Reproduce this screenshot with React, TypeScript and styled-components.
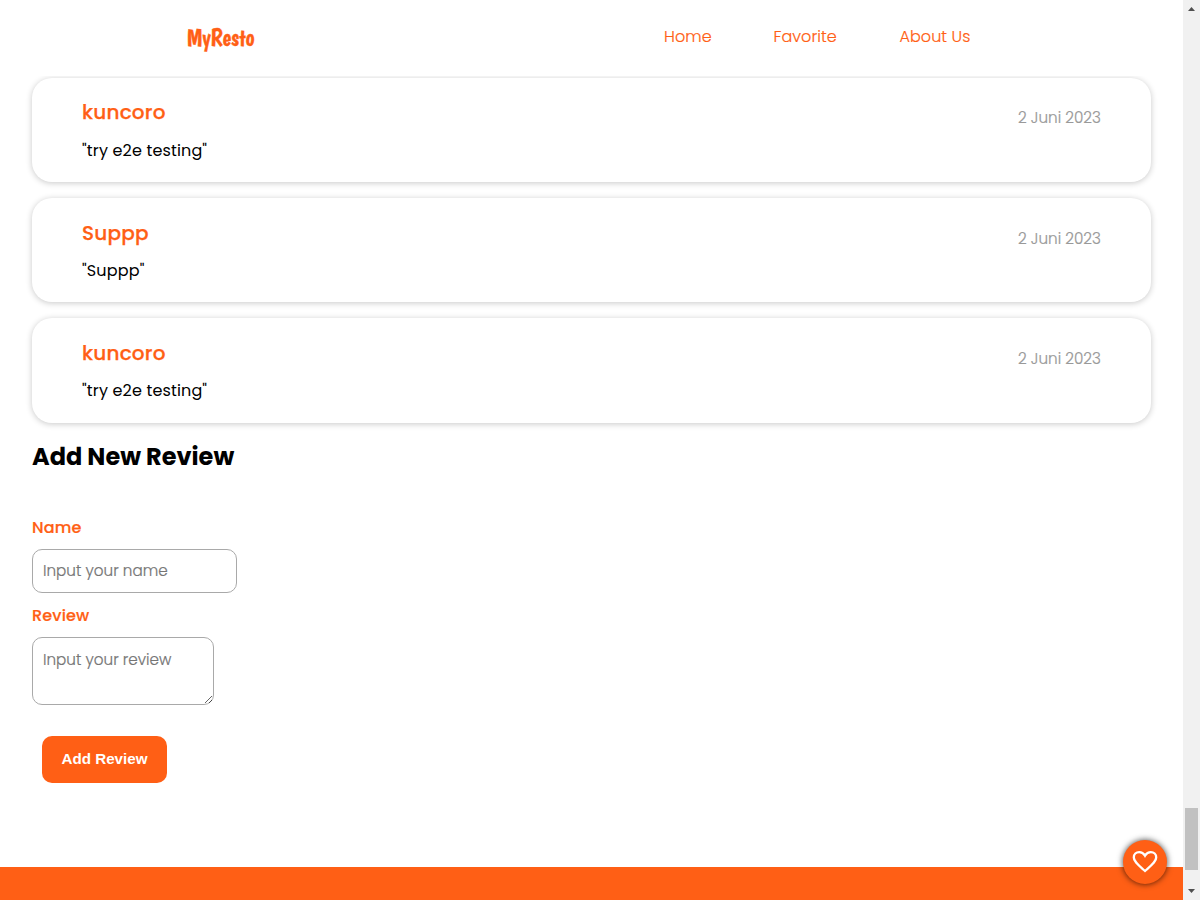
import React from "react";
import styled, { createGlobalStyle } from "styled-components";

const ORANGE = "#ff5f15";
const FONT = 'Poppins, Inter, "Open Sans", sans-serif';

const GlobalStyle = createGlobalStyle`
  * { box-sizing: border-box; }
  body { margin: 0; overflow: hidden; background: #fff; font-family: ${FONT}; color: #000; }
  h2, h3, p { margin: 0; }
`;

const Screen = styled.div`
  display: flex;
  width: 1200px;
  height: 900px;
  overflow: hidden;
`;

const Page = styled.div`
  position: relative;
  display: flex;
  flex-direction: column;
  flex: 1;
  height: 900px;
`;

const Header = styled.header`
  position: relative;
  z-index: 1;
  display: flex;
  flex: none;
  height: 76px;
  padding-left: 187px;
  background: #fff;
`;

const Logo = styled.a`
  width: 477px;
  padding-top: 22px;
  color: ${ORANGE};
  font-family: Boogaloo, Lato, sans-serif;
  font-size: 25px;
  font-weight: 400;
  line-height: 30px;
`;

const LogoText = styled.span`
  display: inline-block;
  transform: scaleX(0.92);
  transform-origin: left;
  -webkit-text-stroke: 0.4px ${ORANGE};
`;

const Nav = styled.nav`
  display: flex;
  gap: 62px;
  padding-top: 25px;
`;

const NavLink = styled.a<{ $width: number }>`
  width: ${(p) => p.$width}px;
  color: ${ORANGE};
  font-size: 16px;
  line-height: 24px;
  font-weight: 300;
  letter-spacing: 0.05px;
  -webkit-text-stroke: 0.2px ${ORANGE};
  white-space: nowrap;
`;

const Reviews = styled.section`
  display: flex;
  flex-direction: column;
  gap: 16px;
  padding: 2px 32px 0;
`;

const Card = styled.article`
  display: flex;
  justify-content: space-between;
  height: 104.2px;
  padding: 19.4px 50px 0;
  border-radius: 20px;
  background: #fff;
  box-shadow: 0 1px 6px rgba(0, 0, 0, 0.22);
`;

const Reviewer = styled.h3`
  color: ${ORANGE};
  font-size: 20px;
  font-weight: 500;
  line-height: 30px;
  letter-spacing: 0.2px;
  -webkit-text-stroke: 0.25px ${ORANGE};
`;

const Comment = styled.p`
  margin-top: 11.2px;
  font-size: 16px;
  line-height: 24px;
  letter-spacing: 0.15px;
`;

const DateText = styled.p`
  width: 83px;
  padding-top: 9px;
  color: #999;
  font-size: 15.2px;
  font-weight: 300;
  line-height: 23px;
  -webkit-text-stroke: 0.2px #999;
  white-space: nowrap;
`;

const Form = styled.form`
  display: flex;
  flex-direction: column;
  align-items: flex-start;
  padding: 16.4px 32px 0;
`;

const Title = styled.h2`
  height: 36px;
  margin-bottom: 41px;
  font-size: 24px;
  font-weight: 700;
  line-height: 36px;
`;

const Label = styled.label`
  color: ${ORANGE};
  font-size: 16px;
  font-weight: 500;
  line-height: 24px;
  letter-spacing: 0.15px;
  -webkit-text-stroke: 0.2px ${ORANGE};
`;

const NameInput = styled.input`
  width: 205px;
  height: 44px;
  margin: 9.4px 0 10.6px;
  padding: 0 10px 2px;
  border: 1px solid #a9a9a9;
  border-radius: 10px;
  font: 300 15.2px ${FONT};
  &::placeholder { color: #757575; -webkit-text-stroke: 0.2px #757575; }
`;

const ReviewInput = styled.textarea`
  width: 182.4px;
  height: 68px;
  margin: 9.4px 0 30.6px;
  padding: 10px;
  border: 1px solid #a9a9a9;
  border-radius: 10px;
  font: 300 15.2px/23px ${FONT};
  resize: both;
  overflow: hidden;
  &::placeholder { color: #757575; -webkit-text-stroke: 0.2px #757575; }
`;

const Submit = styled.button`
  width: 125px;
  height: 47px;
  margin-left: 10px;
  padding: 0 0 2px;
  border: 0;
  border-radius: 10px;
  background: ${ORANGE};
  color: #fff;
  font: 700 15.2px "Liberation Sans", sans-serif;
`;

const Footer = styled.footer`
  height: 33px;
  margin-top: auto;
  background: ${ORANGE};
`;

const LikeButton = styled.button`
  position: absolute;
  right: 16px;
  bottom: 16px;
  display: grid;
  place-items: center;
  width: 44px;
  height: 44px;
  padding: 0;
  border: 0;
  border-radius: 50%;
  background: ${ORANGE};
  box-shadow: 0 0 6px rgba(0, 0, 0, 0.75);
`;

const ScrollTrack = styled.aside`
  display: flex;
  flex-direction: column;
  justify-content: space-between;
  align-items: center;
  width: 17px;
  height: 900px;
  padding: 7px 0;
  background: #f1f1f1;
`;

const Arrow = styled.i<{ $down?: boolean }>`
  width: 7px;
  height: 4px;
  background: #505050;
  clip-path: ${(p) => (p.$down ? "polygon(0 0, 100% 0, 50% 100%)" : "polygon(50% 0, 100% 100%, 0 100%)")};
`;

const Thumb = styled.div`
  width: 13px;
  height: 62px;
  margin: auto 0 19px;
  background: #c1c1c1;
`;

const links = [
  { text: "Home", width: 47.5 },
  { text: "Favorite", width: 64 },
  { text: "About Us", width: 71 },
];

const reviews = [
  { name: "kuncoro", text: '"try e2e testing"' },
  { name: "Suppp", text: '"Suppp"' },
  { name: "kuncoro", text: '"try e2e testing"' },
];

export default function App() {
  return (
    <Screen>
      <GlobalStyle />
      <Page>
        <Header>
          <Logo><LogoText>MyResto</LogoText></Logo>
          <Nav>
            {links.map((l) => (
              <NavLink key={l.text} $width={l.width}>{l.text}</NavLink>
            ))}
          </Nav>
        </Header>
        <Reviews>
          {reviews.map((r, i) => (
            <Card key={i}>
              <div>
                <Reviewer>{r.name}</Reviewer>
                <Comment>{r.text}</Comment>
              </div>
              <DateText>2 Juni 2023</DateText>
            </Card>
          ))}
        </Reviews>
        <Form>
          <Title>Add New Review</Title>
          <Label>Name</Label>
          <NameInput placeholder="Input your name" />
          <Label>Review</Label>
          <ReviewInput placeholder="Input your review" />
          <Submit type="button">Add Review</Submit>
        </Form>
        <Footer />
        <LikeButton aria-label="like">
          <svg width="26" height="22" viewBox="0 0 26 22" fill="none" stroke="#fff" strokeWidth="2.3">
            <path d="M13 20 L11.3 18.5 C5.2 13 1.8 10.1 1.8 6.4 C1.8 3.4 4.1 1.2 7.2 1.2 C9.7 1.2 11.7 2.6 13 4.7 C14.3 2.6 16.3 1.2 18.8 1.2 C21.9 1.2 24.2 3.4 24.2 6.4 C24.2 10.1 20.8 13 14.7 18.5 Z" />
          </svg>
        </LikeButton>
      </Page>
      <ScrollTrack>
        <Arrow />
        <Thumb />
        <Arrow $down />
      </ScrollTrack>
    </Screen>
  );
}
